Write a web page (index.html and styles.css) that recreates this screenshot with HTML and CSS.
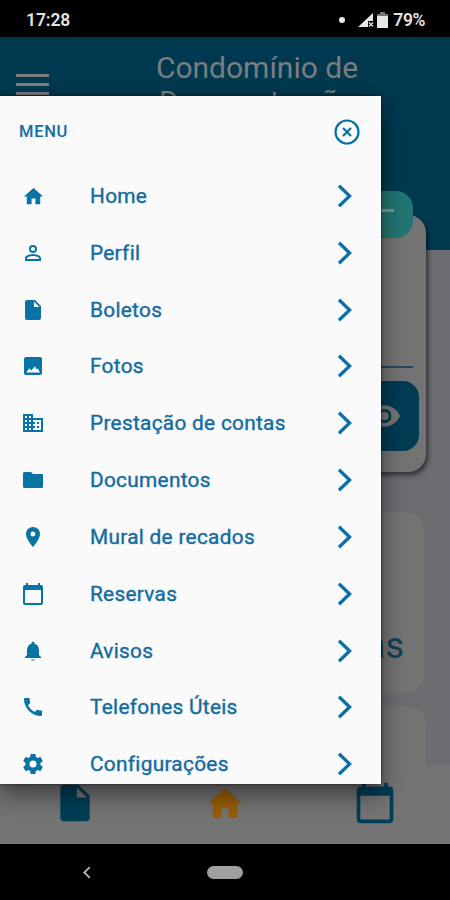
FILE: index.html
```html
<!DOCTYPE html>
<html lang="pt-BR">
<head>
<meta charset="utf-8">
<title>Condomínio</title>
<link rel="stylesheet" href="styles.css">
</head>
<body>
<svg class="defs" aria-hidden="true">
  <symbol id="home" viewBox="0 0 24 24"><path d="M10 20v-6h4v6h5v-8h3L12 3 2 12h3v8z"/></symbol>
  <symbol id="person" viewBox="0 0 24 24"><path d="M12 5.9a2.1 2.1 0 1 1 0 4.2 2.1 2.1 0 0 1 0-4.2m0 9c2.97 0 6.1 1.46 6.1 2.1v1.1H5.9V17c0-.64 3.13-2.1 6.1-2.1M12 4a4 4 0 1 0 0 8 4 4 0 0 0 0-8zm0 9c-2.67 0-8 1.34-8 4v3h16v-3c0-2.66-5.33-4-8-4z"/></symbol>
  <symbol id="file" viewBox="0 0 24 24"><path d="M6 2c-1.1 0-2 .9-2 2v16c0 1.1.9 2 2 2h12c1.1 0 2-.9 2-2V8l-6-6H6zm7 7V3.5L18.5 9H13z"/></symbol>
  <symbol id="image" viewBox="0 0 24 24"><path d="M21 19V5c0-1.100-.9-2-2-2H5c-1.100 0-2 .9-2 2v14c0 1.100.9 2 2 2h14c1.100 0 2-.9 2-2zM5.300 18.500l3-4.300 2 2.400 3.700-4.300 1.500 3.200 1.200-1.300 2.300 4.300z"/></symbol>
  <symbol id="building" viewBox="0 0 24 24"><path d="M12 7V3H2v18h20V7H12zM6 19H4v-2h2v2zm0-4H4v-2h2v2zm0-4H4V9h2v2zm0-4H4V5h2v2zm4 12H8v-2h2v2zm0-4H8v-2h2v2zm0-4H8V9h2v2zm0-4H8V5h2v2zm10 12h-8v-2h2v-2h-2v-2h2v-2h-2V9h8v10zm-2-8h-2v2h2v-2zm0 4h-2v2h2v-2z"/></symbol>
  <symbol id="folder" viewBox="0 0 24 24"><path d="M10 4H3.500c-.9 0-1.500.6-1.500 1.500v13c0 .9.6 1.500 1.500 1.500h17c.9 0 1.500-.6 1.500-1.500V7.200c0-.8-.5-1.200-1.300-1.200H12l-2-2z"/></symbol>
  <symbol id="pin" viewBox="0 0 24 24"><path d="M12 2C8.130 2 5 5.130 5 9c0 5.250 7 13 7 13s7-7.750 7-13c0-3.870-3.130-7-7-7zm0 9.500a2.500 2.500 0 1 1 0-5 2.500 2.500 0 0 1 0 5z"/></symbol>
  <symbol id="calendar" viewBox="0 0 24 24"><path d="M20 3h-1V1h-2v2H7V1H5v2H4c-1.1 0-2 .9-2 2v16c0 1.100.9 2 2 2h16c1.100 0 2-.9 2-2V5c0-1.100-.9-2-2-2zm0 18H4V8h16v13z"/></symbol>
  <symbol id="bell" viewBox="0 0 24 24"><path d="M18 16v-5c0-3.070-1.640-5.640-4.500-6.320V4a1.500 1.500 0 0 0-3 0v.68C7.630 5.360 6 7.920 6 11v5l-2 2v1h16v-1l-2-2z"/><path opacity=".5" d="M12 22c1.100 0 2-.9 2-2h-4c0 1.100.89 2 2 2z"/></symbol>
  <symbol id="phone" viewBox="0 0 24 24"><path d="M20.010 15.380c-1.230 0-2.420-.2-3.530-.56a.98.98 0 0 0-1.010.24l-1.570 1.970c-2.830-1.350-5.480-3.900-6.890-6.830l1.950-1.660c.27-.28.350-.67.240-1.020-.37-1.110-.56-2.300-.56-3.530 0-.54-.45-.99-.99-.99H4.190C3.650 3 3 3.240 3 3.990 3 13.280 10.730 21 20.010 21c.71 0 .99-.63.99-1.180v-3.450c0-.54-.45-.99-.99-.99z"/></symbol>
  <symbol id="gear" viewBox="0 0 24 24"><path d="M19.430 12.980c.04-.32.070-.64.070-.98s-.03-.66-.07-.98l2.110-1.650c.19-.15.240-.42.120-.64l-2-3.460c-.12-.22-.39-.3-.61-.22l-2.490 1c-.52-.4-1.080-.73-1.690-.98l-.38-2.650C14.460 2.180 14.250 2 14 2h-4c-.25 0-.46.180-.49.420l-.38 2.650c-.61.250-1.170.590-1.690.980l-2.490-1c-.23-.09-.49 0-.61.220l-2 3.460c-.13.220-.07.490.120.640l2.110 1.650c-.04.320-.07.650-.07.980s.03.660.070.980l-2.110 1.650c-.19.150-.24.420-.12.640l2 3.460c.12.220.39.300.61.220l2.490-1c.52.400 1.080.730 1.690.980l.38 2.650c.03.240.24.420.49.420h4c.25 0 .46-.18.490-.42l.38-2.650c.61-.25 1.170-.59 1.690-.98l2.490 1c.23.090.49 0 .61-.22l2-3.460c.12-.22.070-.49-.12-.64l-2.110-1.650zM12 15.500a3.500 3.500 0 1 1 0-7 3.500 3.500 0 0 1 0 7z"/></symbol>
  <symbol id="chevron" viewBox="0 0 16 24"><path d="M2 1.800 12.600 12 2 22.200" fill="none" stroke="currentColor" stroke-width="3.300"/></symbol>
</svg>

<div class="phone">
  <div class="status">
    <span class="clock">17:28</span>
    <span class="dot"></span>
    <svg class="signal" viewBox="0 0 16 16"><path d="M0 15 15 1v8H10v6z"/><path d="M11 10.500l4 4m0-4l-4 4" stroke="#ddd" stroke-width="1.400"/></svg>
    <svg class="battery" viewBox="0 0 11 16"><path fill="#777" d="M3 0h5v2h3v3H0V2h3z"/><path d="M0 4h11v12H0z"/></svg>
    <span class="percent">79%</span>
  </div>

  <main class="app">
    <header class="header">
      <div class="burger"><i></i><i></i><i></i></div>
      <h1 class="title">Condomínio de Demonstração</h1>
    </header>
    <div class="content">
      <section class="card card-main">
        <div class="badge"><i></i></div>
        <div class="rule"></div>
        <div class="view"><svg viewBox="0 0 32 24"><path fill="#777" d="M16 1C9 1 3 5.500 0 12c3 6.500 9 11 16 11s13-4.500 16-11C29 5.500 23 1 16 1z"/><circle cx="16" cy="12" r="7.200" fill="#003c55"/><circle cx="16" cy="12" r="4.500" fill="#777"/></svg></div>
      </section>
      <section class="card card-link">Reservas</section>
      <section class="card card-last"></section>
    </div>
    <footer class="tabs">
      <svg class="tab"><use href="#file"/></svg>
      <svg class="tab tab-active"><use href="#home"/></svg>
      <svg class="tab"><use href="#calendar"/></svg>
    </footer>

    <div class="drawer-clip">
      <nav class="drawer">
        <div class="drawer-head">
          <span>MENU</span>
          <svg class="close" viewBox="0 0 26 26"><circle cx="13" cy="13" r="11.500"/><path d="m9 9 8 8m0-8-8 8"/></svg>
        </div>
        <div class="item"><svg class="icon icon-home"><use href="#home"/></svg><span>Home</span><svg class="chev"><use href="#chevron"/></svg></div>
        <div class="item"><svg class="icon"><use href="#person"/></svg><span>Perfil</span><svg class="chev"><use href="#chevron"/></svg></div>
        <div class="item"><svg class="icon"><use href="#file"/></svg><span>Boletos</span><svg class="chev"><use href="#chevron"/></svg></div>
        <div class="item"><svg class="icon"><use href="#image"/></svg><span>Fotos</span><svg class="chev"><use href="#chevron"/></svg></div>
        <div class="item"><svg class="icon"><use href="#building"/></svg><span>Prestação de contas</span><svg class="chev"><use href="#chevron"/></svg></div>
        <div class="item"><svg class="icon"><use href="#folder"/></svg><span>Documentos</span><svg class="chev"><use href="#chevron"/></svg></div>
        <div class="item"><svg class="icon"><use href="#pin"/></svg><span>Mural de recados</span><svg class="chev"><use href="#chevron"/></svg></div>
        <div class="item"><svg class="icon"><use href="#calendar"/></svg><span>Reservas</span><svg class="chev"><use href="#chevron"/></svg></div>
        <div class="item"><svg class="icon"><use href="#bell"/></svg><span>Avisos</span><svg class="chev"><use href="#chevron"/></svg></div>
        <div class="item"><svg class="icon"><use href="#phone"/></svg><span>Telefones Úteis</span><svg class="chev"><use href="#chevron"/></svg></div>
        <div class="item"><svg class="icon"><use href="#gear"/></svg><span>Configurações</span><svg class="chev"><use href="#chevron"/></svg></div>
      </nav>
    </div>
  </main>

  <div class="sysnav">
    <svg class="back" viewBox="0 0 8 12"><path d="M7 1 2 6l5 5"/></svg>
    <span class="pill"></span>
  </div>
</div>
</body>
</html>
```
FILE: styles.css
```css
* { box-sizing: border-box; }
body { margin: 0; font-family: Roboto, sans-serif; background: #000; }
.defs { display: none; }
.phone { width: 450px; height: 900px; display: flex; flex-direction: column; overflow: hidden; }

.status { flex: none; height: 37px; padding: 2px 25px 0 26px; display: flex; align-items: center; color: #e2e2e2; fill: #e6e6e6; font-weight: 600; font-size: 17.500px; }
.clock { margin-right: auto; letter-spacing: -.1px; }
.dot { width: 6px; height: 6px; border-radius: 50%; background: #e8e8e8; margin-right: 13px; }
.signal { width: 16px; height: 16px; margin-right: 3px; }
.battery { width: 11px; height: 16px; margin-right: 5px; }
.percent { letter-spacing: -.4px; }

.app { position: relative; flex: none; height: 807px; display: flex; flex-direction: column; overflow: hidden; background: linear-gradient(#00394f 213px, #6b6d71 213px); }
.header { flex: none; height: 178px; display: flex; padding: 14px 0 0 16px; }
.burger { width: 33px; padding-top: 23px; display: flex; flex-direction: column; gap: 6px; }
.burger i { height: 3px; background: #7b7d80; }
.title { width: 240px; margin: 0 0 0 88px; text-align: center; font-size: 30px; line-height: 34px; font-weight: 400; color: #7b7d80; }
.content { flex: 1; min-height: 0; overflow: hidden; margin-top: -50px; padding: 50px 24px 0; }
.card { background: #747474; border-radius: 18px; }
.card-main { position: relative; height: 257px; padding: 151px 7px 22px 13px; box-shadow: 2px 3px 5px rgba(0,0,0,.55); }
.badge { position: absolute; right: 13px; top: -24px; width: 64px; height: 47px; border-radius: 17px; background: #237673; display: flex; align-items: center; justify-content: center; padding-bottom: 9px; }
.badge i { width: 26px; height: 3px; background: #7e9996; }
.rule { height: 2px; margin-right: 6px; background: #24495c; }
.view { width: 70px; height: 70px; margin: 13px 0 0 auto; border-radius: 16px; background: #003c55; display: flex; align-items: center; justify-content: center; }
.view svg { width: 31px; height: 24px; }
.card-link { height: 181px; margin: 40px 2px 0 0; padding: 113px 20px 0 0; text-align: right; color: #113e57; font-size: 36px; line-height: 42px; }
.card-last { height: 181px; margin-top: 13px; }
.tabs { flex: none; height: 79px; background: #747474; display: flex; justify-content: space-around; align-items: flex-start; padding-top: 16px; }
.tab { width: 44px; height: 44px; fill: #003e57; }
.tab-active { fill: #995d06; width: 42px; height: 42px; margin-top: 2px; }

.drawer-clip { position: absolute; left: 0; top: 59px; width: 381px; height: 688px; box-shadow: 0 10px 24px rgba(0,0,0,.5), 0 0 3px rgba(0,0,0,.6); }
.drawer { height: 100%; overflow: hidden; background: #fafafa; color: #146ca0; }
.drawer-head { height: 71.600px; display: flex; align-items: center; justify-content: space-between; padding: 0 21px 0 19px; font-size: 16.500px; font-weight: 500; letter-spacing: .7px; }
.close { width: 26px; height: 26px; fill: none; stroke: #0b70a5; stroke-width: 2.200; }
.item { height: 56.820px; display: grid; grid-template-columns: 50px 1fr 16px; column-gap: 20px; align-items: center; padding: 0 28px 0 20px; font-size: 20.800px; font-weight: 400; letter-spacing: .3px; -webkit-text-stroke: .4px #146ca0; }
.icon { width: 24px; height: 24px; margin-left: 1px; fill: #0874a4; }
.icon-home { width: 23px; height: 23px; margin-left: 1.500px; }
.chev { width: 16px; height: 24px; color: #0b70a5; }

.sysnav { flex: 1; display: grid; grid-template-columns: 1fr 36px 1fr; align-items: center; }
.back { width: 9px; height: 13px; margin-left: 82px; fill: none; stroke: #b0b0b0; stroke-width: 1.800; }
.pill { height: 13px; border-radius: 7px; background: #a0a0a0; }
```
